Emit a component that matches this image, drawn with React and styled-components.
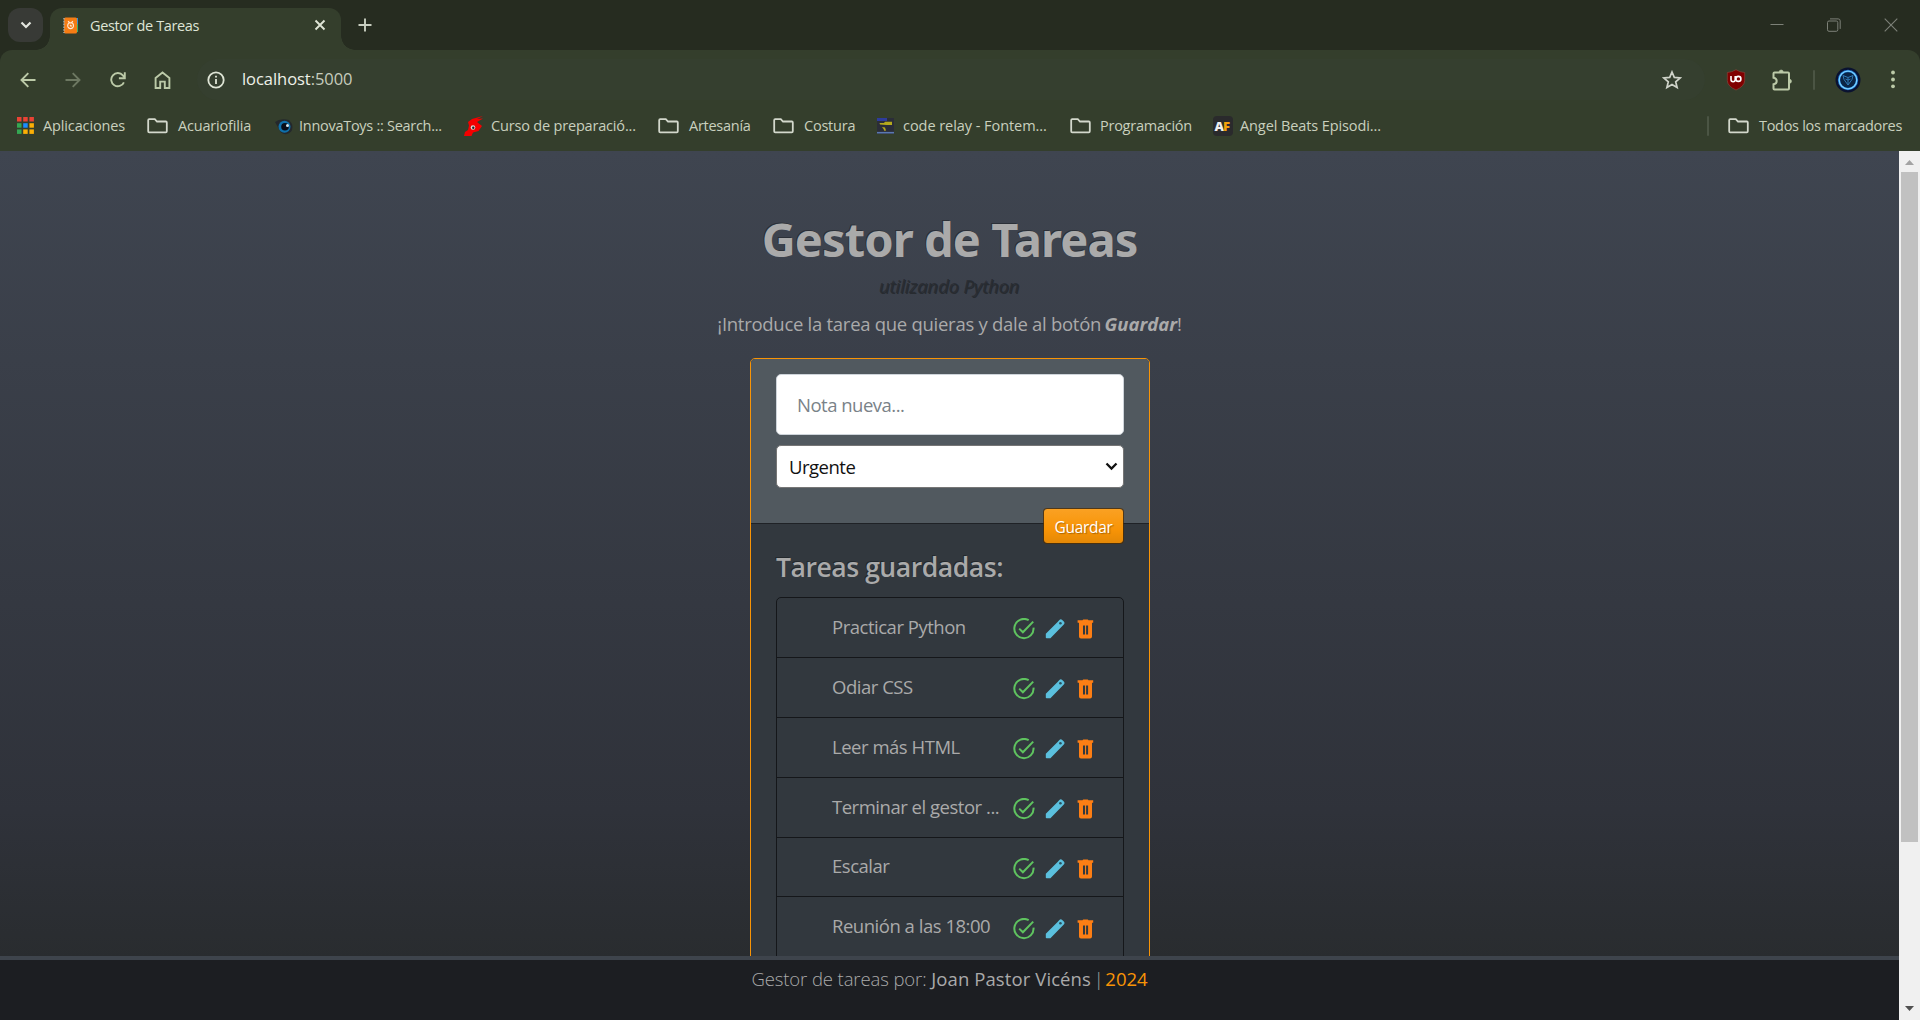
import React from 'react';
import styled, { createGlobalStyle } from 'styled-components';

const UI = '"Open Sans", "Noto Sans", sans-serif';
const BRAND = '"Noto Sans", "Open Sans", sans-serif';

const GlobalStyle = createGlobalStyle`
  *, *::before, *::after { box-sizing: border-box; }
  body { margin: 0; background: #262c20; font-family: ${UI}; overflow: hidden; }
  svg { display: block; flex: none; }
`;

const Window = styled.div`
  display: flex;
  flex-direction: column;
  width: 1920px;
  height: 1020px;
  overflow: hidden;
`;

/* ---------- browser chrome ---------- */
const TabStrip = styled.div`
  display: flex;
  align-items: flex-start;
  height: 50px;
  padding: 8px 0 0 8px;
  background: #262c20;
`;
const TabSearch = styled.div`
  display: grid;
  place-items: center;
  width: 35px;
  height: 34px;
  border-radius: 12px;
  background: #383a36;
`;
const Tab = styled.div`
  position: relative;
  display: flex;
  align-items: center;
  width: 291px;
  height: 42px;
  margin-left: 7px;
  padding: 0 15px 8px 13px;
  border-radius: 12px 12px 0 0;
  background: #343e2c;
  &::before, &::after {
    content: '';
    position: absolute;
    bottom: 0;
    width: 14px;
    height: 14px;
  }
  &::before { left: -14px; background: radial-gradient(circle at 0 0, transparent 13.5px, #343e2c 14px); }
  &::after { right: -14px; background: radial-gradient(circle at 100% 0, transparent 13.5px, #343e2c 14px); }
`;
const TabTitle = styled.span`
  flex: 1;
  margin-left: 12px;
  padding-top: 2px;
  font-size: 14.5px;
  line-height: 20px;
  letter-spacing: -0.38px;
  color: #dfe5d6;
  white-space: nowrap;
`;
const NewTab = styled.div`
  display: grid;
  place-items: center;
  width: 34px;
  height: 34px;
  margin-left: 7px;
`;
const Controls = styled.div`
  display: flex;
  align-items: center;
  height: 34px;
  margin-left: auto;
  padding-right: 22px;
  gap: 43px;
`;
const Toolbar = styled.div`
  display: flex;
  flex-direction: column;
  height: 101px;
  padding-top: 9px;
  border-radius: 12px 12px 0 0;
  background: #343e2c;
`;
const AddressRow = styled.div`
  display: flex;
  align-items: center;
  height: 41px;
  padding: 0 5px;
`;
const NavButton = styled.div`
  display: grid;
  place-items: center;
  width: 45px;
  height: 40px;
`;
const Omnibox = styled.div`
  display: flex;
  align-items: center;
  width: 1508px;
  height: 41px;
  margin-left: 12px;
  padding: 0 23px 0 10px;
  border-radius: 21px;
  background: #353f2f;
`;
const Url = styled.span`
  flex: 1;
  margin-left: 17px;
  padding-bottom: 1px;
  font-size: 16.5px;
  line-height: 24px;
  letter-spacing: -0.05px;
  color: #eef1e8;
  span { color: #c6ccbd; }
`;
const Extensions = styled.div`
  display: flex;
  align-items: center;
  margin-left: auto;
`;
const BlockerShield = styled.svg`
  margin-right: 13px;
`;
const Avatar = styled.svg`
  margin-right: 9px;
`;
const Divider = styled.i`
  width: 2px;
  height: 20px;
  margin: ${(p) => p.$margin};
  border-radius: 1px;
  background: #4b5544;
`;
const Bookmarks = styled.div`
  display: flex;
  align-items: center;
  height: 51px;
  padding: 0 18px 0 17px;
`;
const Bookmark = styled.div`
  display: flex;
  align-items: center;
  width: ${(p) => (p.$width ? `${p.$width}px` : 'auto')};
`;
const BookmarkIcon = styled.span`
  width: ${(p) => p.$slot}px;
`;
const BookmarkLabel = styled.span`
  padding-top: 1px;
  font-size: 14.5px;
  line-height: 20px;
  letter-spacing: ${(p) => p.$spacing}px;
  color: #c9d0be;
  white-space: nowrap;
`;

/* ---------- page ---------- */
const Viewport = styled.div`
  display: flex;
  flex: 1;
  min-height: 0;
`;
const Page = styled.div`
  display: flex;
  flex-direction: column;
  width: 1899px;
  background: linear-gradient(#3f4550, #2f323a 76%, #292c2f 93%);
`;
const Content = styled.main`
  display: flex;
  flex-direction: column;
  align-items: center;
  height: 805px;
  padding-top: 58px;
  overflow: hidden;
  color: #aaa;
`;
const Title = styled.h1`
  margin: 0;
  padding-top: 1px;
  font: 700 47px/58px ${BRAND};
  letter-spacing: -0.9px;
  text-shadow: -1px -1px 0 rgba(0, 0, 0, 0.3);
`;
const Subtitle = styled.p`
  margin: 0;
  padding-left: 1px;
  font: italic 400 18.5px/38px ${BRAND};
  letter-spacing: -0.2px;
  color: #272b30;
  text-shadow: -1px -1px 0 rgba(0, 0, 0, 0.3);
`;
const Intro = styled.p`
  margin: -1px 0 0;
  font-size: 18.5px;
  line-height: 38px;
  letter-spacing: -0.28px;
  white-space: nowrap;
  em { margin-left: -1px; font-weight: 700; letter-spacing: 0; }
`;
const Card = styled.section`
  flex: none;
  width: 400px;
  height: 620px;
  margin: 15px 0 0 1px;
  border: 1px solid #f89406;
  border-radius: 5px;
  background: #32383e;
`;
const CardHeader = styled.form`
  display: flex;
  flex-direction: column;
  height: 165px;
  padding: 15px 25px 0;
  border-bottom: 1px solid #1f2226;
  border-radius: 4px 4px 0 0;
  background: #51595f;
`;
const NoteInput = styled.input`
  flex: none;
  width: 348px;
  height: 61px;
  padding: 0 20px 0;
  border: 1px solid #ced4da;
  border-radius: 5px;
  background: #fff;
  font: 400 18.5px ${UI};
  letter-spacing: -0.5px;
  &::placeholder { color: #7a8288; opacity: 1; }
`;
const Select = styled.div`
  display: flex;
  flex: none;
  align-items: center;
  justify-content: space-between;
  height: 43px;
  margin-top: 10px;
  padding: 0 5px 0 12px;
  border: 1px solid #767676;
  border-radius: 5px;
  background: #fff;
  color: #111;
  font-size: 18.5px;
  letter-spacing: -0.5px;
`;
const SaveButton = styled.button`
  align-self: flex-end;
  flex: none;
  width: 81px;
  height: 36px;
  margin-top: 20px;
  padding: 2px 0 0;
  border: 1px solid rgba(80, 45, 0, 0.75);
  border-radius: 4px;
  background: linear-gradient(#faa123, #f89406 60%, #e48806) padding-box;
  color: #fff;
  font: 400 15.5px ${UI};
  letter-spacing: -0.3px;
  text-shadow: 1px 1px 1px rgba(0, 0, 0, 0.3);
`;
const CardBody = styled.div`
  padding: 24px 25px 0;
`;
const ListTitle = styled.h2`
  margin: 0;
  font-size: 26.5px;
  font-weight: 600;
  line-height: 38px;
  letter-spacing: -0.44px;
  white-space: nowrap;
  text-shadow: -1px -1px 0 rgba(0, 0, 0, 0.3);
`;
const TaskList = styled.ul`
  margin: 11px 0 0;
  padding: 0;
  width: 348px;
  border: 1px solid #15171a;
  border-radius: 5px 5px 0 0;
  list-style: none;
`;
const TaskRow = styled.li`
  display: flex;
  align-items: center;
  height: ${(p) => p.$height}px;
  padding: 0 29px 0 55px;
  & + & { border-top: 1px solid #15171a; }
`;
const TaskName = styled.span`
  flex: 1;
  padding-bottom: 1.5px;
  font-size: 18.5px;
  line-height: 28px;
  letter-spacing: -0.48px;
  white-space: nowrap;
`;
const Actions = styled.span`
  display: flex;
  align-items: center;
  padding-top: 3px;
  gap: 9.5px;
  svg:last-child { margin-left: 3px; }
`;
const Footer = styled.footer`
  height: 64px;
  padding-top: 4px;
  border-top: 4px solid #3e444c;
  background: #1c1e22;
  color: #aaa;
  font: 300 18.5px/30px ${UI};
  letter-spacing: -0.1px;
  text-align: center;
  white-space: pre;
  b { margin-right: -2px; font-weight: 500; letter-spacing: 0.1px; }
  strong { margin-left: -3px; font-weight: 500; letter-spacing: 0; color: #f89406; }
`;
const Scrollbar = styled.div`
  display: flex;
  flex-direction: column;
  align-items: center;
  justify-content: space-between;
  width: 21px;
  padding: 9px 2px;
  background: #f0f0f0;
`;
const Thumb = styled.div`
  width: 17px;
  height: 670px;
  margin: 7px 0 auto;
  background: #c1c1c1;
`;

/* ---------- icons ---------- */
const Line = ({ w = 20, h = w, color = '#c8d1b9', sw = 2, children }) => (
  <svg width={w} height={h} viewBox={`0 0 ${w} ${h}`} fill="none" stroke={color} strokeWidth={sw}>
    {children}
  </svg>
);
const Folder = () => (
  <Line w={21} h={16} color="#d3d8cc" sw={1.8}>
    <path d="M1.2 13.3V2.2q0-1 1-1h5.6l2.2 2.3h8.8q1 0 1 1v8.8q0 1-1 1H2.2q-1 0-1-1z" />
  </Line>
);
const Apps = () => {
  const colors = ['#ea4335', '#ea4335', '#ea4335', '#34a853', '#1a8cff', '#fbaf05', '#34a853', '#fbaf05', '#fbaf05'];
  return (
    <svg width="17" height="17">
      {colors.map((c, i) => (
        <rect key={i} x={(i % 3) * 6.2} y={Math.floor(i / 3) * 6.2} width="4.5" height="4.5" fill={c} />
      ))}
    </svg>
  );
};
const Eye = () => (
  <svg width="18" height="18">
    <path d="M0 5q5-4 14-2l3 4q2 8-5 10-6 1-8-5z" fill="#24282c" />
    <circle cx="9.5" cy="9.8" r="6" fill="#0f70aa" />
    <circle cx="10" cy="9.8" r="3.8" fill="#090d18" />
    <circle cx="12.5" cy="8.5" r="1.5" fill="#d6e6ee" />
  </svg>
);
const RedBird = () => (
  <svg width="21" height="20">
    <path d="M4 6l4-3 11-3-6 3 6-.5-6 3.5 5 4-3.5 5-5.5 1.5-1.5 3.5H0l1-4 3-2 1-4.500z" fill="#f40000" />
    <circle cx="9" cy="11.5" r="2.3" fill="#d8dada" />
    <circle cx="9.3" cy="11.7" r="1.2" fill="#222" />
  </svg>
);
const Relay = () => (
  <svg width="17" height="16">
    <rect width="17" height="16" fill="#2b2d38" />
    <path d="M0 0h10v3H0z" fill="#2e3c9a" />
    <path d="M2.500 5H7l1-1.200h7V7H9.500L3 6.500zM5 9l3 .5 1 3-1.500.5L6.500 11z" fill="#b5a91d" />
    <path d="M0 14.700h17" stroke="#5a78b0" strokeWidth="1.6" />
  </svg>
);
const AnimeLogo = () => (
  <svg width="20" height="20">
    <rect width="20" height="20" rx="4" fill="#2a2a2c" />
    <text x="1.6" y="15" fontFamily="Open Sans" fontWeight="800" fontSize="13" letterSpacing="-1" fill="#eee">
      A<tspan fill="#f5a10a">F</tspan>
    </text>
  </svg>
);
const Favicon = () => (
  <svg width="15" height="17">
    <rect x="13" y="1" width="2" height="6" fill="#3b8ed0" />
    <rect x="13" y="7" width="2" height="8" fill="#3daf60" />
    <rect x="1" y="0.5" width="13" height="16" rx="1.5" fill="#f57c14" />
    <path d="M1 1v15" stroke="#a8b0b0" strokeWidth="1.4" strokeDasharray="1.6 1.2" />
    <path d="M5 4.300l2 1.600h1l2-1.600M4.700 8.700a2.900 2.900 0 105.800 0 2.900 2.900 0 00-5.800 0M7 7.700l1 1.500 1-.6" fill="none" stroke="#ffe9d6" strokeWidth="1.1" />
  </svg>
);
const Check = () => (
  <Line w={22} color="#5fc35f">
    <path d="M15.700 2.200A9.600 9.600 0 1020.500 9.600" />
    <path d="M6.200 10.600l3.700 3.700L20.200 3.600" />
  </Line>
);
const Pencil = () => (
  <svg width="20" height="20">
    <path
      d="M.8 14.700L12.600 2.900l1.800-1.900a2 2 0 012.800 0l1.600 1.600a2 2 0 010 2.800L5.400 19.300H1.600a.8.8 0 01-.8-.8z"
      fill="#5bc0de"
    />
    <circle cx="15.4" cy="4.3" r="1.3" fill="#2c5260" />
  </svg>
);
const Trash = () => (
  <svg width="17" height="20">
    <path
      fillRule="evenodd"
      d="M5.500 1.300L6.200.5h4.600l.7.8h4.700v2.400H.6V1.300zM2 4.200h13v13.300a2 2 0 01-2 2H4a2 2 0 01-2-2zM6 6.600v9h2v-9zm3.100 0v9h2v-9z"
      fill="#fd7e14"
    />
    <rect x="2" y="3" width="13" height="2" fill="#fd7e14" />
  </svg>
);

const BOOKMARKS = [
  { label: 'Aplicaciones', icon: <Apps />, slot: 26, width: 130, spacing: -0.13 },
  { label: 'Acuariofilia', icon: <Folder />, slot: 31, width: 128, spacing: -0.19 },
  { label: 'InnovaToys :: Search...', icon: <Eye />, slot: 24, width: 189, spacing: -0.28 },
  { label: 'Curso de preparació...', icon: <RedBird />, slot: 27, width: 194, spacing: -0.18 },
  { label: 'Artesanía', icon: <Folder />, slot: 31, width: 115, spacing: -0.27 },
  { label: 'Costura', icon: <Folder />, slot: 31, width: 104, spacing: -0.22 },
  { label: 'code relay - Fontem...', icon: <Relay />, slot: 26, width: 193, spacing: -0.05 },
  { label: 'Programación', icon: <Folder />, slot: 30, width: 143, spacing: -0.25 },
  { label: 'Angel Beats Episodi...', icon: <AnimeLogo />, slot: 27, width: 180, spacing: -0.1 },
];
const TASKS = [
  'Practicar Python',
  'Odiar CSS',
  'Leer más HTML',
  'Terminar el gestor ...',
  'Escalar',
  'Reunión a las 18:00',
];
const ROW_HEIGHTS = [59, 60, 60, 60, 59, 61];

export default function App() {
  return (
    <Window>
      <GlobalStyle />
      <TabStrip>
        <TabSearch>
          <Line w={12} h={8} color="#e3e6df" sw={2.2}><path d="M1.500 1.500L6 6l4.500-4.500" /></Line>
        </TabSearch>
        <Tab>
          <Favicon />
          <TabTitle>Gestor de Tareas</TabTitle>
          <Line w={12} color="#dfe5d6" sw={1.9}><path d="M1.500 1.500l9 9M10.500 1.500l-9 9" /></Line>
        </Tab>
        <NewTab>
          <Line w={14} color="#c8cec0" sw={1.9}><path d="M7 .5v13M.5 7h13" /></Line>
        </NewTab>
        <Controls>
          <Line w={14} color="#7d8178" sw={1}><path d="M.5 6.500h13" /></Line>
          <Line w={14} color="#7d8178" sw={1}>
            <rect x=".5" y="3" width="10.3" height="10.3" rx="1.5" />
            <path d="M3 .9h8.200q2 0 2 2v8" />
          </Line>
          <Line w={14} color="#7d8178" sw={1.1}><path d="M.7.7l12.600 12.600M13.300.7L.7 13.300" /></Line>
        </Controls>
      </TabStrip>
      <Toolbar>
        <AddressRow>
          <NavButton><Line w={16} color="#bccaa8" sw={1.9}><path d="M15.500 8H2M8.300 1.200L1.500 8l6.800 6.800" /></Line></NavButton>
          <NavButton><Line w={16} color="#6d7862" sw={1.9}><path d="M.5 8H14M7.700 1.200L14.500 8l-6.800 6.800" /></Line></NavButton>
          <NavButton>
            <Line w={16} color="#bccaa8" sw={1.9}>
              <path d="M13.900 10.300A6.600 6.600 0 1112.900 3.400L14.400 5.400" />
              <path d="M14.800.3v5.900H8.900" />
            </Line>
          </NavButton>
          <NavButton>
            <Line w={17} h={18} color="#bccaa8" sw={1.9}>
              <path d="M1.600 17V6.900L8.500 1.400l6.900 5.500V17h-4.600v-6.400H6.200V17z" />
            </Line>
          </NavButton>
          <Omnibox>
            <Line w={18} color="#dfe5d6" sw={1.8}>
              <circle cx="9" cy="9" r="7.7" />
              <path d="M9 8v5M9 4.700v1.900" />
            </Line>
            <Url>localhost<span>:5000</span></Url>
            <Line w={20} color="#cfd3c9" sw={1.7}>
              <path d="M10 2l2.300 5.400 5.900.5-4.500 3.900 1.400 5.700L10 14.400l-5.100 3.100 1.400-5.700-4.500-3.900 5.900-.5z" />
            </Line>
          </Omnibox>
          <Extensions>
            <BlockerShield width="20" height="22">
              <path d="M10 .7q4 2.600 8.700 2.800v8.200q-.3 5.600-8.700 9.300-8.400-3.700-8.700-9.300V3.500Q6 3.300 10 .7z" fill="#800000" stroke="#8c4a40" strokeWidth=".6" />
              <path d="M5 7v3.500q0 2.200 2.100 2.200t2.100-2.200V7" fill="none" stroke="#fff" strokeWidth="1.6" />
              <circle cx="12.4" cy="9.9" r="2.5" fill="none" stroke="#fff" strokeWidth="1.6" />
            </BlockerShield>
            <NavButton>
              <Line w={22} h={22} color="#bccaa8" sw={2}>
                <path d="M2.500 4.500q0-1 1-1h13.500q1 0 1 1v15q0 1-1 1H3.500q-1 0-1-1v-4.200q3.200-.5 3.200-3.300T2.500 8.700z" />
                <path d="M8.200 3a2 2 0 014 0zM18.500 10.300a2 2 0 010 4z" fill="#bccaa8" strokeWidth=".6" />
              </Line>
            </NavButton>
            <Divider $margin="0 20px 0 9px" />
            <Avatar width="26" height="26" fill="none">
              <circle cx="13" cy="13" r="12.5" fill="#0a1230" />
              <circle cx="13" cy="13" r="9" fill="#0b2444" stroke="#1a6dc8" strokeWidth="2.4" />
              <circle cx="13" cy="13" r="8.8" stroke="#79d2ff" strokeWidth="1.3" />
              <path d="M8 8.500l1 4 4 5.500 4-5.500 1-4-5 2zM10.500 12l2.500 1 2.500-1M13 10.500V18" stroke="#2f78b4" strokeWidth="1" />
            </Avatar>
            <NavButton>
              <svg width="4" height="19" fill="#bccaa8">
                <circle cx="2" cy="2.5" r="1.9" />
                <circle cx="2" cy="9.5" r="1.9" />
                <circle cx="2" cy="16.3" r="1.9" />
              </svg>
            </NavButton>
          </Extensions>
        </AddressRow>
        <Bookmarks>
          {BOOKMARKS.map((b) => (
            <Bookmark key={b.label} $width={b.width}>
              <BookmarkIcon $slot={b.slot}>{b.icon}</BookmarkIcon>
              <BookmarkLabel $spacing={b.spacing}>{b.label}</BookmarkLabel>
            </Bookmark>
          ))}
          <Divider $margin="0 19px 0 auto" />
          <Bookmark>
            <BookmarkIcon $slot={31}><Folder /></BookmarkIcon>
            <BookmarkLabel $spacing={-0.3}>Todos los marcadores</BookmarkLabel>
          </Bookmark>
        </Bookmarks>
      </Toolbar>
      <Viewport>
        <Page>
          <Content>
            <Title>Gestor de Tareas</Title>
            <Subtitle>utilizando Python</Subtitle>
            <Intro>¡Introduce la tarea que quieras y dale al botón <em>Guardar</em>!</Intro>
            <Card>
              <CardHeader>
                <NoteInput placeholder="Nota nueva..." />
                <Select>
                  Urgente
                  <Line w={13} h={9} color="#111" sw={2.3}><path d="M1.500 1.500l5 5 5-5" /></Line>
                </Select>
                <SaveButton type="button">Guardar</SaveButton>
              </CardHeader>
              <CardBody>
                <ListTitle>Tareas guardadas:</ListTitle>
                <TaskList>
                  {TASKS.map((task, i) => (
                    <TaskRow key={task} $height={ROW_HEIGHTS[i]}>
                      <TaskName>{task}</TaskName>
                      <Actions><Check /><Pencil /><Trash /></Actions>
                    </TaskRow>
                  ))}
                </TaskList>
              </CardBody>
            </Card>
          </Content>
          <Footer>Gestor de tareas por: <b>Joan Pastor Vicéns</b> | <strong>2024</strong></Footer>
        </Page>
        <Scrollbar>
          <svg width="9" height="5"><path d="M4.500 0L9 5H0z" fill="#a3a3a3" /></svg>
          <Thumb />
          <svg width="9" height="5"><path d="M4.500 5L9 0H0z" fill="#505050" /></svg>
        </Scrollbar>
      </Viewport>
    </Window>
  );
}
